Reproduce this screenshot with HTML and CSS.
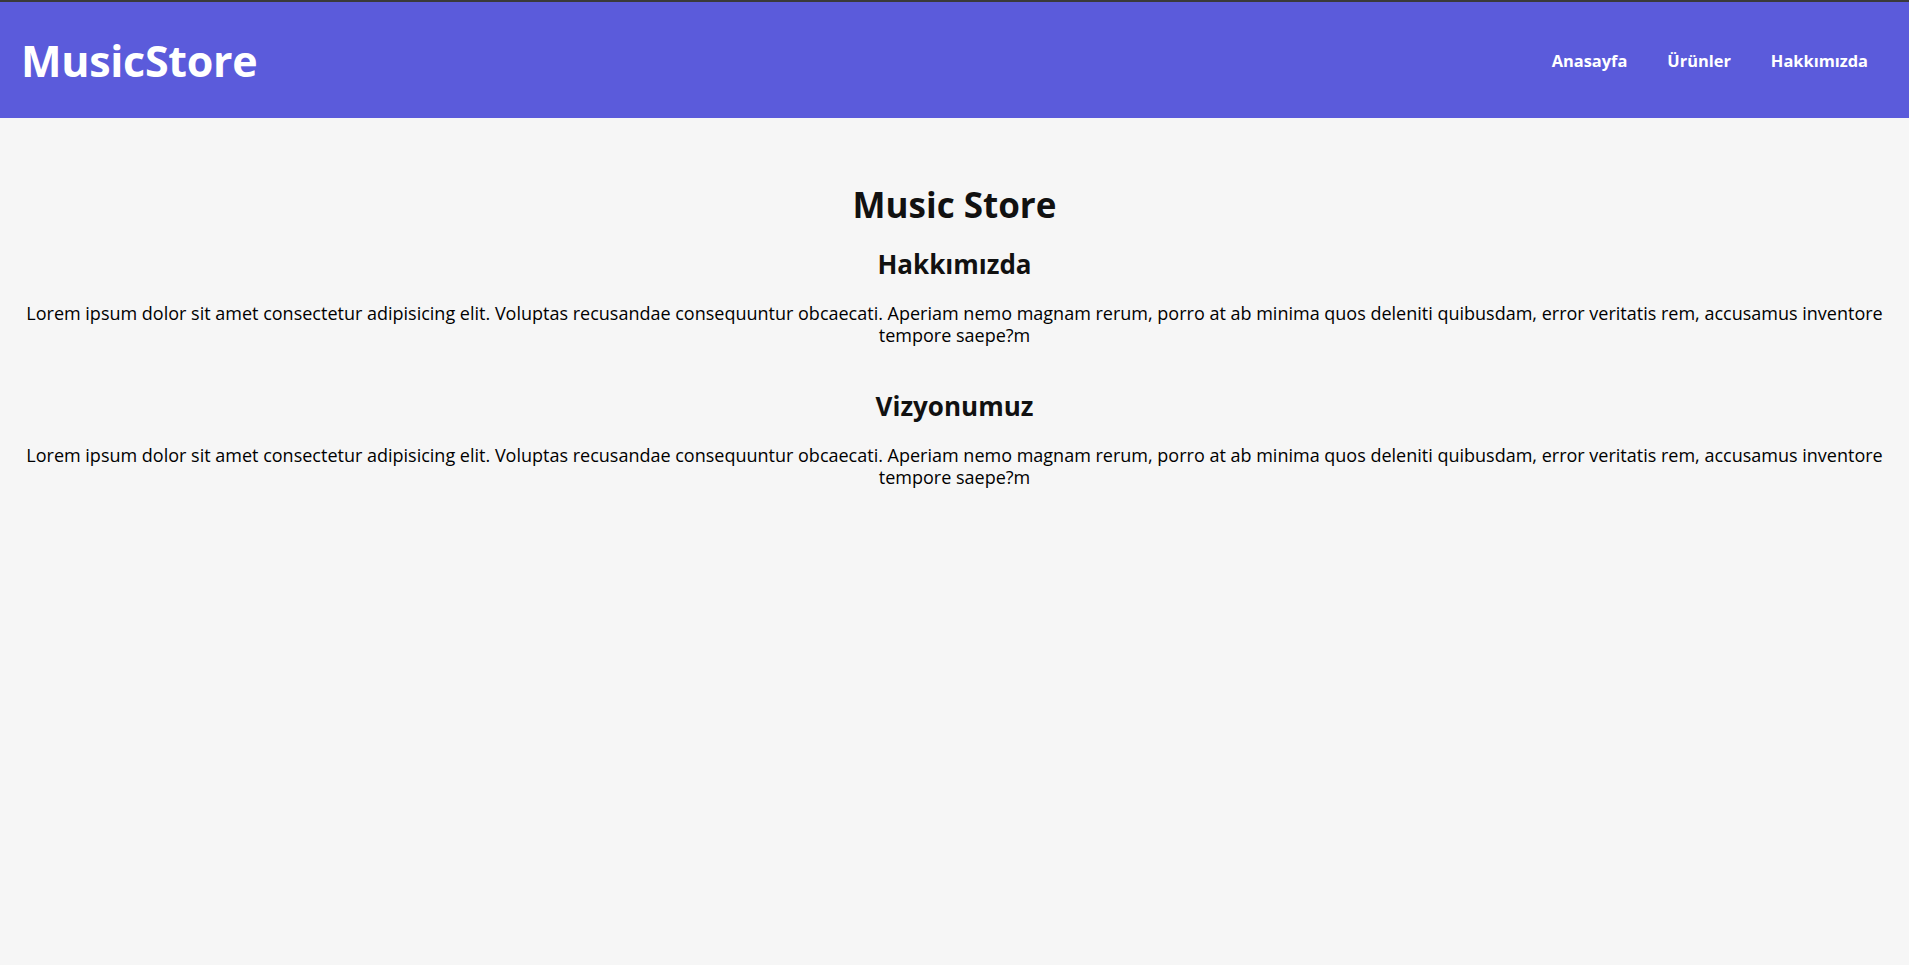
FILE: index.html
```html
<!DOCTYPE html>
<html lang="tr">
<head>
<meta charset="utf-8">
<title>MusicStore</title>
<link rel="stylesheet" href="styles.css">
</head>
<body>
<header class="site-header">
  <a class="logo" href="#">MusicStore</a>
  <nav class="nav">
    <a href="#">Anasayfa</a>
    <a href="#">Ürünler</a>
    <a href="#">Hakkımızda</a>
  </nav>
</header>
<main class="content">
  <h1 class="title">Music Store</h1>
  <section class="block">
    <h2 class="block-title">Hakkımızda</h2>
    <p class="block-text">Lorem ipsum dolor sit amet consectetur adipisicing elit. Voluptas recusandae consequuntur obcaecati. Aperiam nemo magnam rerum, porro at ab minima quos deleniti quibusdam, error veritatis rem, accusamus inventore tempore saepe?m</p>
  </section>
  <section class="block">
    <h2 class="block-title">Vizyonumuz</h2>
    <p class="block-text">Lorem ipsum dolor sit amet consectetur adipisicing elit. Voluptas recusandae consequuntur obcaecati. Aperiam nemo magnam rerum, porro at ab minima quos deleniti quibusdam, error veritatis rem, accusamus inventore tempore saepe?m</p>
  </section>
</main>
</body>
</html>
```
FILE: styles.css
```css
html, body {
  margin: 0;
  padding: 0;
  background: #f6f6f6;
  font-family: "Open Sans", sans-serif;
  color: #000;
}

.site-header {
  display: flex;
  align-items: center;
  justify-content: space-between;
  height: 116px;
  border-top: 2px solid #3a3a3a;
  background: #5b5bdb;
  padding: 0 41px 0 21px;
}

.logo {
  color: #fff;
  text-decoration: none;
  font-weight: 700;
  font-size: 43px;
  letter-spacing: -0.3px;
}

.nav {
  display: flex;
  gap: 40px;
}

.nav a {
  color: #fff;
  text-decoration: none;
  font-weight: 700;
  font-size: 16.4px;
}

.content {
  padding: 0 20px;
  text-align: center;
}

.title {
  margin: 67px 0 23px;
  font-size: 35px;
  line-height: 40px;
  font-weight: 700;
  color: #111;
}

.block + .block {
  margin-top: 44px;
}

.block-title {
  margin: 0 0 22px;
  font-size: 26px;
  line-height: 32px;
  font-weight: 700;
  color: #111;
}

.block-text {
  margin: 0;
  font-size: 18px;
  line-height: 22px;
}
```
